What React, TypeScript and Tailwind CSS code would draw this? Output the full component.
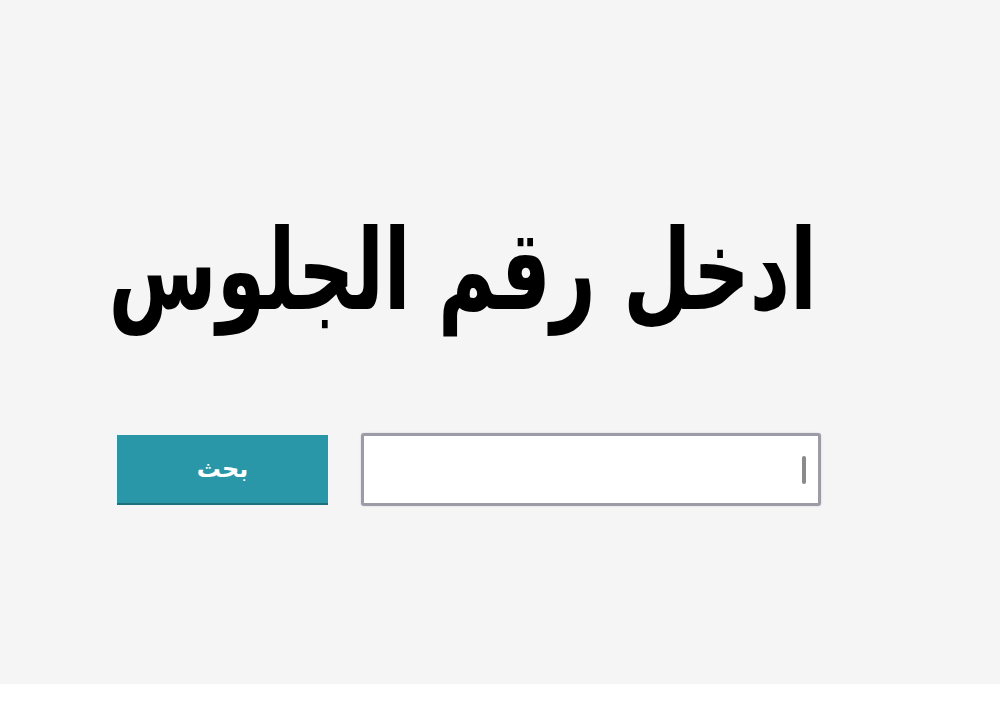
import React from 'react';

export default function App() {
  return (
    <div className="w-[1000px] h-[719px] bg-white flex flex-col" style={{ fontFamily: '"DejaVu Sans", sans-serif' }}>
      <div className="h-[684px] bg-[#f5f5f5] flex flex-col">
        <div className="mt-[190px] h-[160px] flex justify-end pr-[183px]">
          <h1 dir="rtl" className="whitespace-nowrap origin-right scale-x-[0.70] text-[112px] font-bold leading-[160px] text-black">
            ادخل رقم الجلوس
          </h1>
        </div>
        <div className="mt-[83px] flex items-center gap-[33px] pl-[117px]">
          <button className="w-[211px] h-[70px] bg-[#2a97a8] border-b-2 border-[#1e6f7c] text-white text-[24px] font-bold" dir="rtl">
            بحث
          </button>
          <div className="w-[460px] h-[73px] bg-white border-[3px] border-[#9c9ca8] rounded-[3px] shadow-[0_0_2px_rgba(0,0,0,0.15)] flex items-center justify-end pr-[12px]">
            <span className="w-[4px] h-[28px] bg-[#8a8a8a] rounded-full"></span>
          </div>
        </div>
      </div>
    </div>
  );
}
